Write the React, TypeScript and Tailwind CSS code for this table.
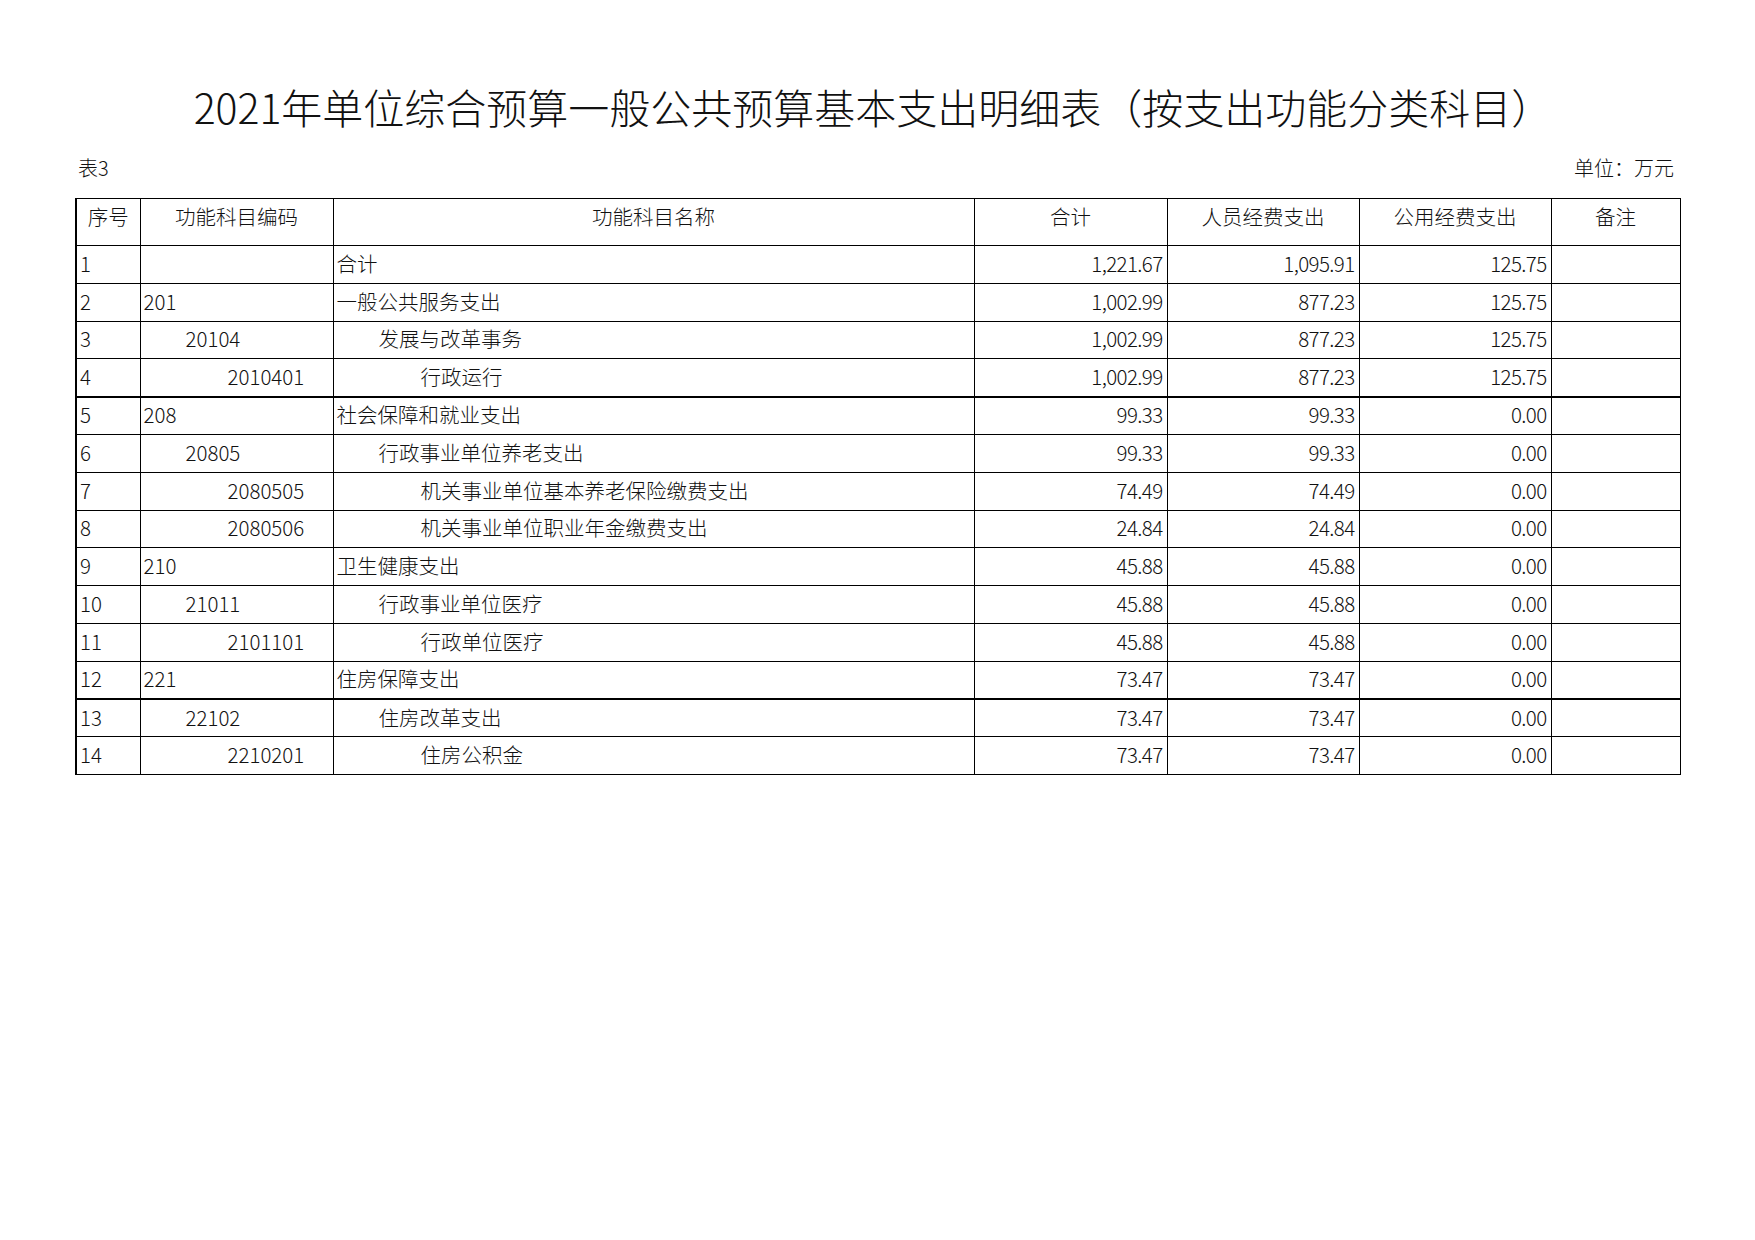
import React from "react";

type Row = {
  no: number;
  code: string;
  name: string;
  level: number;
  total: string;
  staff: string;
  office: string;
  thickTop?: boolean;
};

const rows: Row[] = [
  { no: 1, code: "", name: "合计", level: 0, total: "1,221.67", staff: "1,095.91", office: "125.75" },
  { no: 2, code: "201", name: "一般公共服务支出", level: 0, total: "1,002.99", staff: "877.23", office: "125.75" },
  { no: 3, code: "20104", name: "发展与改革事务", level: 1, total: "1,002.99", staff: "877.23", office: "125.75" },
  { no: 4, code: "2010401", name: "行政运行", level: 2, total: "1,002.99", staff: "877.23", office: "125.75" },
  { no: 5, code: "208", name: "社会保障和就业支出", level: 0, total: "99.33", staff: "99.33", office: "0.00", thickTop: true },
  { no: 6, code: "20805", name: "行政事业单位养老支出", level: 1, total: "99.33", staff: "99.33", office: "0.00" },
  { no: 7, code: "2080505", name: "机关事业单位基本养老保险缴费支出", level: 2, total: "74.49", staff: "74.49", office: "0.00" },
  { no: 8, code: "2080506", name: "机关事业单位职业年金缴费支出", level: 2, total: "24.84", staff: "24.84", office: "0.00" },
  { no: 9, code: "210", name: "卫生健康支出", level: 0, total: "45.88", staff: "45.88", office: "0.00" },
  { no: 10, code: "21011", name: "行政事业单位医疗", level: 1, total: "45.88", staff: "45.88", office: "0.00" },
  { no: 11, code: "2101101", name: "行政单位医疗", level: 2, total: "45.88", staff: "45.88", office: "0.00" },
  { no: 12, code: "221", name: "住房保障支出", level: 0, total: "73.47", staff: "73.47", office: "0.00" },
  { no: 13, code: "22102", name: "住房改革支出", level: 1, total: "73.47", staff: "73.47", office: "0.00", thickTop: true },
  { no: 14, code: "2210201", name: "住房公积金", level: 2, total: "73.47", staff: "73.47", office: "0.00" },
];

const indent = ["pl-[3px]", "pl-[45px]", "pl-[87px]"];

export default function App() {
  return (
    <div
      className="w-[1755px] h-[1240px] bg-white text-[#111] font-light"
      style={{ fontFamily: '"Noto Sans CJK SC", "Noto Sans", sans-serif' }}
    >
      <div className="ml-[75px] w-[1604px] pt-[85px]">
        {/* Title */}
        <h1 className="text-center pr-[8px] text-[41px] leading-[43px] font-light whitespace-nowrap">
          2021年单位综合预算一般公共预算基本支出明细表（按支出功能分类科目）
        </h1>

        {/* Sub line */}
        <div className="mt-[28px] flex justify-between text-[20px] leading-[24px] px-[3px] pr-[5px]">
          <span>表3</span>
          <span>单位：万元</span>
        </div>

        {/* Table */}
        <table className="mt-[18px] w-[1604px] table-fixed border-collapse text-[20.5px] border border-black border-l-2">
          <colgroup>
            <col className="w-[64px]" />
            <col className="w-[193px]" />
            <col className="w-[641px]" />
            <col className="w-[193px]" />
            <col className="w-[192px]" />
            <col className="w-[192px]" />
            <col className="w-[129px]" />
          </colgroup>
          <thead>
            <tr className="h-[47px]">
              {["序号", "功能科目编码", "功能科目名称", "合计", "人员经费支出", "公用经费支出", "备注"].map((h) => (
                <th
                  key={h}
                  className="border border-black align-top pt-[3px] leading-[28px] font-light text-center"
                >
                  {h}
                </th>
              ))}
            </tr>
          </thead>
          <tbody>
            {rows.map((r) => {
              const top = r.thickTop ? "border-t-2" : "";
              return (
                <tr key={r.no} className="h-[37.8px]">
                  <td className={`border border-black ${top} pl-[3px] pb-[3px] leading-[26px] whitespace-nowrap`}>{r.no}</td>
                  <td className={`border border-black ${top} ${indent[r.level]} pb-[3px] leading-[26px] whitespace-nowrap`}>
                    {r.code}
                  </td>
                  <td className={`border border-black ${top} ${indent[r.level]} pb-[3px] leading-[26px] whitespace-nowrap`}>
                    {r.name}
                  </td>
                  <td className={`border border-black ${top} text-right pr-[4px] pb-[3px] leading-[26px] tracking-[-0.03em]`}>
                    {r.total}
                  </td>
                  <td className={`border border-black ${top} text-right pr-[4px] pb-[3px] leading-[26px] tracking-[-0.03em]`}>
                    {r.staff}
                  </td>
                  <td className={`border border-black ${top} text-right pr-[4px] pb-[3px] leading-[26px] tracking-[-0.03em]`}>
                    {r.office}
                  </td>
                  <td className={`border border-black ${top}`}></td>
                </tr>
              );
            })}
          </tbody>
        </table>
      </div>
    </div>
  );
}
